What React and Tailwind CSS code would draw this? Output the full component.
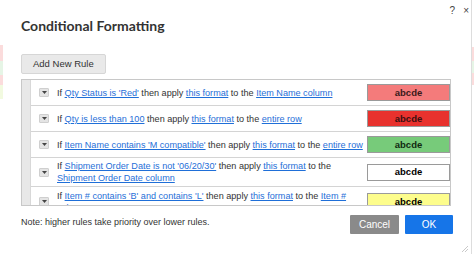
import React from 'react'

const rules = [
  {
    parts: [['If ', 0], ["Qty Status is 'Red'", 1], [' then apply ', 0], ['this format', 1], [' to the ', 0], ['Item Name column', 1]],
    swatch: 'bg-[#f47b7b] text-[#3a1a1a]',
    h: 'h-[26px]',
  },
  {
    parts: [['If ', 0], ['Qty is less than 100', 1], [' then apply ', 0], ['this format', 1], [' to the ', 0], ['entire row', 1]],
    swatch: 'bg-[#e8322e] text-[#3a1010]',
    h: 'h-[26px]',
  },
  {
    parts: [['If ', 0], ["Item Name contains 'M compatible'", 1], [' then apply ', 0], ['this format', 1], [' to the ', 0], ['entire row', 1]],
    swatch: 'bg-[#77cb7a] text-[#102a10]',
    h: 'h-[26px]',
  },
  {
    parts: [['If ', 0], ["Shipment Order Date is not '06/20/30'", 1], [' then apply ', 0], ['this format', 1], [' to the ', 0], ['Shipment Order Date column', 1]],
    swatch: 'bg-white text-black',
    h: 'h-[29px]',
  },
  {
    parts: [['If ', 0], ["Item # contains 'B' and contains 'L'", 1], [' then apply ', 0], ['this format', 1], [' to the ', 0], ['Item # column', 1]],
    swatch: 'bg-[#fdfd8c] text-black',
    h: 'h-[29px]',
  },
]

function Toggle() {
  return (
    <div className="w-[10px] h-[9px] shrink-0 bg-[#e4e4e4] border border-[#cfcfcf] rounded-[1px] flex items-center justify-center">
      <svg width="5" height="3" viewBox="0 0 5 3"><path d="M0 0h5L2.5 3z" fill="#444" /></svg>
    </div>
  )
}

function Rule({ rule, last }) {
  return (
    <div className={`flex items-center ${rule.h} shrink-0 ${last ? '' : 'border-b border-[#d4d4d4]'}`}>
      <div className="w-[26px] flex justify-center shrink-0">
        <Toggle />
      </div>
      <p className="w-[310px] shrink-0 text-[9.1px] leading-[12px] text-[#333]">
        {rule.parts.map(([t, link], i) =>
          link ? (
            <span key={i} className="text-[#1f6fd8] underline">{t}</span>
          ) : (
            <span key={i}>{t}</span>
          )
        )}
      </p>
      <div className="flex-1 flex justify-end pr-[2px]">
        <div className={`w-[83px] h-[17px] border border-[#9a9a9a] flex items-center justify-center text-[9.5px] font-bold ${rule.swatch}`}>
          abcde
        </div>
      </div>
    </div>
  )
}

export default function App() {
  return (
    <div className="w-[474px] h-[254px] flex bg-white overflow-hidden" style={{ fontFamily: '"Liberation Sans", Arial, sans-serif' }}>
      <div className="w-[3px] flex flex-col pt-[45px]">
        <div className="h-[16px] bg-[#fbdcdc]" />
        <div className="h-[14px] bg-[#e6f5e6]" />
        <div className="h-[10px] bg-[#fbdcdc]" />
        <div className="h-[14px] bg-[#f2fae0]" />
      </div>
      <div className="flex-1 relative flex flex-col px-[18px]">
        <div className="absolute right-[2px] top-[3px] flex gap-[8px] text-[10px] text-[#444]">
          <span>?</span>
          <span>×</span>
        </div>
        <h1 className="pt-[15px] h-[50px] text-[14px] font-bold text-[#333]" style={{ fontFamily: 'Lato, "Open Sans", sans-serif' }}>
          Conditional Formatting
        </h1>
        <div>
          <button className="h-[20px] px-[11px] bg-[#e9e9e9] border border-[#d6d6d6] rounded-[2px] text-[9.5px] text-[#333]">
            Add New Rule
          </button>
        </div>
        <div className="mt-[5px] w-[430px] h-[127px] border border-[#c8c8c8] flex overflow-hidden">
          <div className="w-[9px] shrink-0 bg-[#e8e8e8] border-r border-[#d8d8d8]" />
          <div className="flex-1 flex flex-col">
            {rules.map((r, i) => (
              <Rule key={i} rule={r} last={i === rules.length - 1} />
            ))}
          </div>
        </div>
        <div className="flex items-start justify-between mt-[9px] w-[432px]">
          <p className="text-[9px] text-[#333] pt-[1px]">Note: higher rules take priority over lower rules.</p>
          <div className="flex gap-[6px]">
            <button className="w-[49px] h-[19px] bg-[#8a8a8a] text-white text-[10px] rounded-[1px]">Cancel</button>
            <button className="w-[48px] h-[19px] bg-[#1675e8] text-white text-[10px] rounded-[1px]">OK</button>
          </div>
        </div>
        <svg className="absolute right-[3px] bottom-[2px]" width="6" height="6" viewBox="0 0 6 6">
          <path d="M6 0L0 6M6 3L3 6" stroke="#bbb" strokeWidth="0.8" />
        </svg>
      </div>
      <div className="w-[3px] flex flex-col border-l border-[#ddd] pt-[47px]">
        <div className="h-[14px] bg-[#fbdcdc]" />
        <div className="h-[12px] bg-[#e6f5e6]" />
        <div className="h-[12px] bg-[#fbdcdc]" />
      </div>
    </div>
  )
}
